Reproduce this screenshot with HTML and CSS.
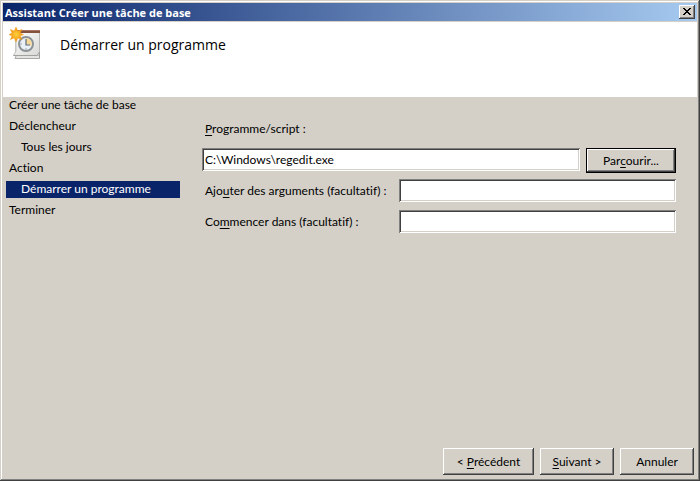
FILE: index.html
```html
<!DOCTYPE html>
<html lang="fr">
<head>
  <meta charset="UTF-8" />
  <meta name="viewport" content="width=device-width, initial-scale=1.0"/>
  <title>Assistant Créer une tâche de base</title>
  <link rel="stylesheet" href="styles.css">
</head>
<body>
  <div class="window">
    <div class="titlebar">
      <span class="title">Assistant Créer une tâche de base</span>
      <button class="close" type="button" aria-label="Fermer">
        <svg width="8" height="7" viewBox="0 0 8 7" shape-rendering="crispEdges">
          <path d="M0 0h2v1h1v1h2v-1h1v-1h2v1h-1v1h-1v1h-1v1h1v1h1v1h1v1h-2v-1h-1v-1h-2v1h-1v1h-2v-1h1v-1h1v-1h1v-1h-1v-1h-1v-1h-1z" fill="#000"/>
        </svg>
      </button>
    </div>

    <header>
      <svg class="icon" width="32" height="32" viewBox="0 0 32 32">
        <defs>
          <linearGradient id="paper" x1="0" y1="0" x2="1" y2="1">
            <stop offset="0" stop-color="#fff"/>
            <stop offset="1" stop-color="#d8d8d6"/>
          </linearGradient>
          <radialGradient id="sun">
            <stop offset="0" stop-color="#ffd23c"/>
            <stop offset="1" stop-color="#f08c0c"/>
          </radialGradient>
        </defs>
        <!-- calendar pages -->
        <path d="M7 5V29L6 31.500H30.500V5z" fill="#e4e4e2" stroke="#a8a8a6"/>
        <path d="M7 4H30.500V28.500H4.500L7 24z" fill="url(#paper)" stroke="#b4b4b2" stroke-width=".8"/>
        <path d="M4.500 28.500H28L30.500 25V31" fill="none" stroke="#999997" stroke-width=".8"/>
        <path d="M8 3H31V6H8z" fill="#85513f"/>
        <path d="M8 3H31V4H8z" fill="#a57463"/>
        <!-- clock -->
        <circle cx="17" cy="17" r="7" fill="#e9f0f6" stroke="#8d9296" stroke-width="2"/>
        <path d="M17 17V11a6 6 0 0 1 5.500 8z" fill="#f6d998"/>
        <path d="M17 12V18H21" fill="none" stroke="#5f6b78" stroke-width="1.2"/>
        <path d="M17 21v2M11 17h2" stroke="#a5abb0"/>
        <!-- star -->
        <path d="M7 0L8.800 4L13 2.400L11.200 6L14.500 7.500L11.200 9L13 12.600L8.800 11L7 15L5.200 11L1.400 12.600L3 9L0 7.500L3 6L1.400 2.400L5.200 4z" fill="url(#sun)" stroke="#f29a14" stroke-width=".4"/>
      </svg>
      <h1>Démarrer un programme</h1>
    </header>

    <main>
      <nav>
        <ul class="steps">
          <li>Créer une tâche de base</li>
          <li>Déclencheur</li>
          <li class="sub">Tous les jours</li>
          <li>Action</li>
          <li class="sub selected">Démarrer un programme</li>
          <li>Terminer</li>
        </ul>
      </nav>

      <form class="fields">
        <label for="program"><u>P</u>rogramme/script :</label>
        <div class="row program-row">
          <input type="text" id="program" value="C:\Windows\regedit.exe">
          <button class="btn default" type="button">Par<u>c</u>ourir...</button>
        </div>
        <div class="row">
          <label for="args">Ajo<u>u</u>ter des arguments (facultatif) :</label>
          <input type="text" id="args">
        </div>
        <div class="row">
          <label for="startin">Co<u>m</u>mencer dans (facultatif) :</label>
          <input type="text" id="startin">
        </div>
      </form>
    </main>

    <footer>
      <button class="btn wide" type="button">&lt; <u>P</u>récédent</button>
      <button class="btn" type="button"><u>S</u>uivant &gt;</button>
      <button class="btn" type="button">Annuler</button>
    </footer>
  </div>
</body>
</html>
```

FILE: styles.css
```css
* {
  box-sizing: border-box;
}
body {
  margin: 0;
  font-family: Lato, "Open Sans", sans-serif;
  font-size: 12px;
  font-variant-ligatures: none;
  line-height: 17px;
  color: #000;
  background-color: #d4d0c8;
}
.window {
  display: flex;
  flex-direction: column;
  min-height: 100vh;
  padding: 3px;
  background-color: #d4d0c8;
  box-shadow: inset -1px -1px #404040, inset 1px 1px #d4d0c8,
    inset -2px -2px #808080, inset 2px 2px #fff;
}
.titlebar {
  display: flex;
  justify-content: space-between;
  align-items: center;
  height: 18px;
  padding: 0 2px;
  background: linear-gradient(to right, #0a246a, #a6caf0);
}
.title {
  color: white;
  font-family: "Open Sans", "Noto Sans", sans-serif;
  font-size: 11px;
  font-weight: bold;
}
.close {
  display: flex;
  justify-content: center;
  align-items: center;
  width: 16px;
  height: 14px;
  padding: 0 1px 1px 0;
  border: none;
  background-color: #d4d0c8;
  box-shadow: inset -1px -1px #404040, inset 1px 1px #fff, inset -2px -2px #808080;
}
header {
  display: flex;
  align-items: flex-start;
  gap: 19px;
  height: 75px;
  margin-top: 1px;
  padding: 5px 6px;
  background-color: white;
}
h1 {
  margin: 6px 0 0;
  font-family: "Open Sans", "Noto Sans", sans-serif;
  font-size: 14px;
  line-height: 24px;
  font-weight: normal;
}
main {
  display: flex;
  flex: 1;
}
nav {
  width: 199px;
  padding: 0 22px 0 3px;
}
.steps {
  display: flex;
  flex-direction: column;
  gap: 4px;
  margin: 0;
  padding: 0;
  list-style: none;
}
.steps li {
  padding: 0 0 2px 3px;
  line-height: 15px;
}
.steps .sub {
  padding-left: 15px;
}
.steps .selected {
  background-color: #0a246a;
  color: white;
}
.fields {
  flex: 1;
  padding: 23px 21px 0 0;
}
label {
  padding-left: 3px;
}
u {
  text-underline-offset: 2px;
}
.row {
  display: flex;
  align-items: center;
  justify-content: space-between;
  margin-bottom: 8px;
}
.program-row {
  align-items: flex-start;
  gap: 6px;
  margin: 11px 0 6px;
}
input {
  width: 277px;
  height: 23px;
  padding: 0 3px 1px;
  border: none;
  background-color: white;
  box-shadow: inset 1px 1px #808080, inset -1px -1px #fff,
    inset 2px 2px #404040, inset -2px -2px #d4d0c8;
  font: inherit;
}
input:focus {
  outline: none;
}
.program-row input {
  flex: 1;
}
.btn {
  width: 74px;
  height: 27px;
  padding: 0;
  border: none;
  background-color: #d4d0c8;
  box-shadow: inset -1px -1px #404040, inset 1px 1px #fff, inset -2px -2px #808080;
  color: #000;
  font: inherit;
}
.btn.wide {
  width: 91px;
}
.btn.default {
  width: 90px;
  height: 25px;
  border: 1px solid #000;
}
footer {
  display: flex;
  justify-content: flex-end;
  gap: 6px;
  padding: 0 3px 3px;
}
```
